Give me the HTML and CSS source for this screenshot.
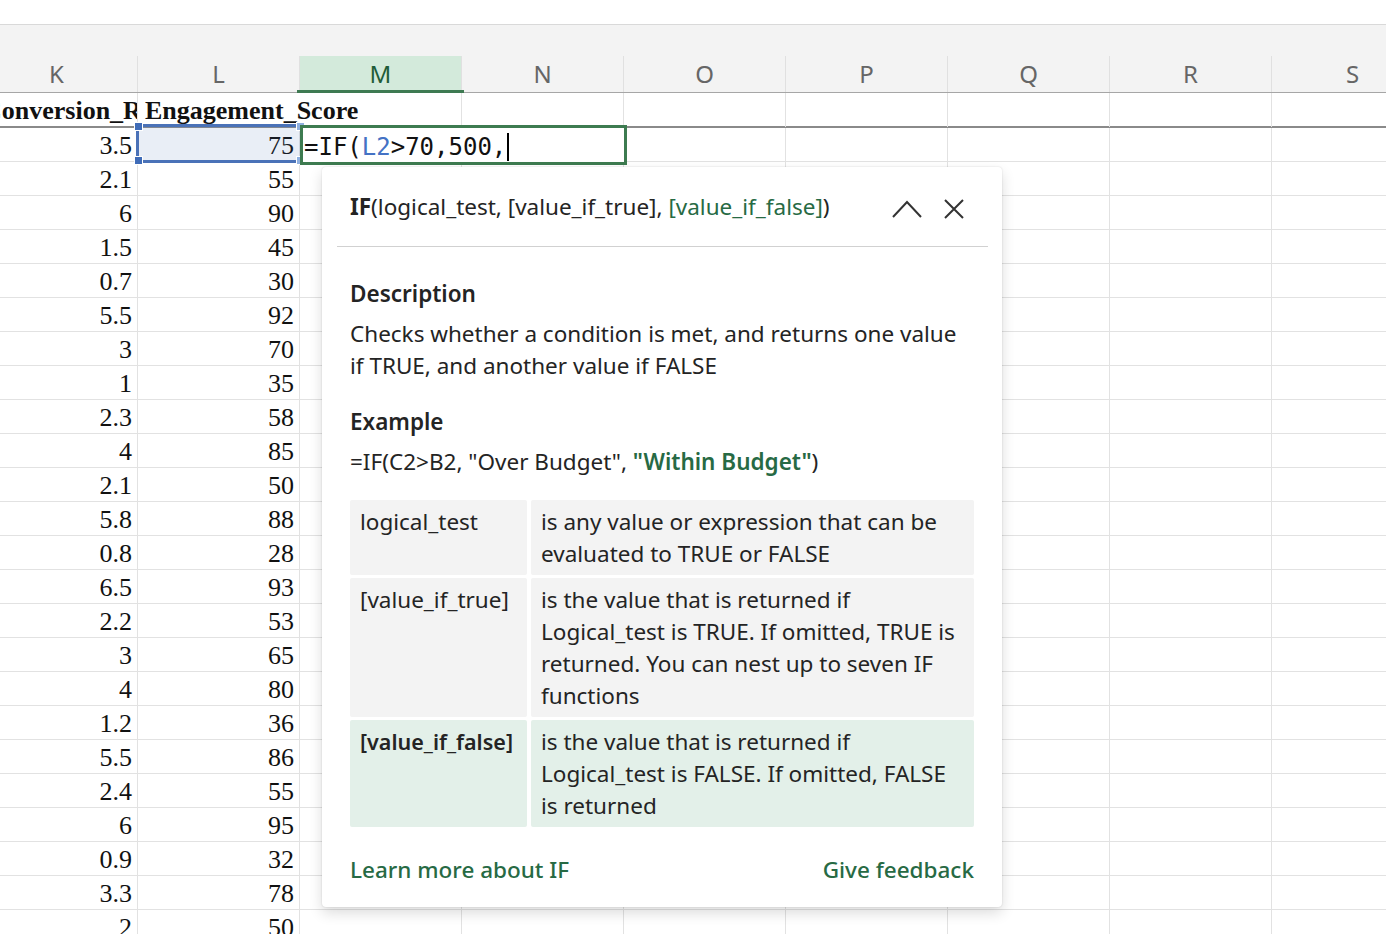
FILE: index.html
```html
<!DOCTYPE html>
<html>
<head>
<meta charset="utf-8">
<link rel="stylesheet" href="styles.css">
</head>
<body>
<div class="app">
  <div class="topbar"></div>
  <div class="sheet">
    <div class="band">
      <div class="row hdr">
        <div class="h">K</div><div class="h">L</div><div class="h on">M</div><div class="h">N</div><div class="h">O</div><div class="h">P</div><div class="h">Q</div><div class="h">R</div><div class="h">S</div>
      </div>
    </div>
    <div class="row r1">
      <div class="c t clip">Conversion_Rate</div><div class="c t over">Engagement_Score</div><div class="c"></div><div class="c"></div><div class="c"></div><div class="c"></div><div class="c"></div><div class="c"></div><div class="c"></div>
    </div>
    <div class="row"><div class="c">3.5</div><div class="c">75</div><div class="c"></div><div class="c"></div><div class="c"></div><div class="c"></div><div class="c"></div><div class="c"></div><div class="c"></div></div>
    <div class="row"><div class="c">2.1</div><div class="c">55</div><div class="c"></div><div class="c"></div><div class="c"></div><div class="c"></div><div class="c"></div><div class="c"></div><div class="c"></div></div>
    <div class="row"><div class="c">6</div><div class="c">90</div><div class="c"></div><div class="c"></div><div class="c"></div><div class="c"></div><div class="c"></div><div class="c"></div><div class="c"></div></div>
    <div class="row"><div class="c">1.5</div><div class="c">45</div><div class="c"></div><div class="c"></div><div class="c"></div><div class="c"></div><div class="c"></div><div class="c"></div><div class="c"></div></div>
    <div class="row"><div class="c">0.7</div><div class="c">30</div><div class="c"></div><div class="c"></div><div class="c"></div><div class="c"></div><div class="c"></div><div class="c"></div><div class="c"></div></div>
    <div class="row"><div class="c">5.5</div><div class="c">92</div><div class="c"></div><div class="c"></div><div class="c"></div><div class="c"></div><div class="c"></div><div class="c"></div><div class="c"></div></div>
    <div class="row"><div class="c">3</div><div class="c">70</div><div class="c"></div><div class="c"></div><div class="c"></div><div class="c"></div><div class="c"></div><div class="c"></div><div class="c"></div></div>
    <div class="row"><div class="c">1</div><div class="c">35</div><div class="c"></div><div class="c"></div><div class="c"></div><div class="c"></div><div class="c"></div><div class="c"></div><div class="c"></div></div>
    <div class="row"><div class="c">2.3</div><div class="c">58</div><div class="c"></div><div class="c"></div><div class="c"></div><div class="c"></div><div class="c"></div><div class="c"></div><div class="c"></div></div>
    <div class="row"><div class="c">4</div><div class="c">85</div><div class="c"></div><div class="c"></div><div class="c"></div><div class="c"></div><div class="c"></div><div class="c"></div><div class="c"></div></div>
    <div class="row"><div class="c">2.1</div><div class="c">50</div><div class="c"></div><div class="c"></div><div class="c"></div><div class="c"></div><div class="c"></div><div class="c"></div><div class="c"></div></div>
    <div class="row"><div class="c">5.8</div><div class="c">88</div><div class="c"></div><div class="c"></div><div class="c"></div><div class="c"></div><div class="c"></div><div class="c"></div><div class="c"></div></div>
    <div class="row"><div class="c">0.8</div><div class="c">28</div><div class="c"></div><div class="c"></div><div class="c"></div><div class="c"></div><div class="c"></div><div class="c"></div><div class="c"></div></div>
    <div class="row"><div class="c">6.5</div><div class="c">93</div><div class="c"></div><div class="c"></div><div class="c"></div><div class="c"></div><div class="c"></div><div class="c"></div><div class="c"></div></div>
    <div class="row"><div class="c">2.2</div><div class="c">53</div><div class="c"></div><div class="c"></div><div class="c"></div><div class="c"></div><div class="c"></div><div class="c"></div><div class="c"></div></div>
    <div class="row"><div class="c">3</div><div class="c">65</div><div class="c"></div><div class="c"></div><div class="c"></div><div class="c"></div><div class="c"></div><div class="c"></div><div class="c"></div></div>
    <div class="row"><div class="c">4</div><div class="c">80</div><div class="c"></div><div class="c"></div><div class="c"></div><div class="c"></div><div class="c"></div><div class="c"></div><div class="c"></div></div>
    <div class="row"><div class="c">1.2</div><div class="c">36</div><div class="c"></div><div class="c"></div><div class="c"></div><div class="c"></div><div class="c"></div><div class="c"></div><div class="c"></div></div>
    <div class="row"><div class="c">5.5</div><div class="c">86</div><div class="c"></div><div class="c"></div><div class="c"></div><div class="c"></div><div class="c"></div><div class="c"></div><div class="c"></div></div>
    <div class="row"><div class="c">2.4</div><div class="c">55</div><div class="c"></div><div class="c"></div><div class="c"></div><div class="c"></div><div class="c"></div><div class="c"></div><div class="c"></div></div>
    <div class="row"><div class="c">6</div><div class="c">95</div><div class="c"></div><div class="c"></div><div class="c"></div><div class="c"></div><div class="c"></div><div class="c"></div><div class="c"></div></div>
    <div class="row"><div class="c">0.9</div><div class="c">32</div><div class="c"></div><div class="c"></div><div class="c"></div><div class="c"></div><div class="c"></div><div class="c"></div><div class="c"></div></div>
    <div class="row"><div class="c">3.3</div><div class="c">78</div><div class="c"></div><div class="c"></div><div class="c"></div><div class="c"></div><div class="c"></div><div class="c"></div><div class="c"></div></div>
    <div class="row"><div class="c">2</div><div class="c">50</div><div class="c"></div><div class="c"></div><div class="c"></div><div class="c"></div><div class="c"></div><div class="c"></div><div class="c"></div></div>
  </div>

  <div class="refbox">
    <span class="hd tl"></span><span class="hd bl"></span><span class="hd tr"></span><span class="hd br"></span>
  </div>
  <div class="edit">=IF(<span class="ref">L2</span>&gt;70,500,<span class="caret"></span></div>

  <div class="popup">
    <div class="pop-head">
      <div class="sig"><b>IF</b>(logical_test, [value_if_true], <span class="cur">[value_if_false]</span>)</div>
      <div class="tools">
        <span class="ib"><svg width="32" height="32" viewBox="0 0 32 32"><path d="M2 26 L16 11 L30 26" fill="none" stroke="#333" stroke-width="2"/></svg></span>
        <span class="ib"><svg width="32" height="32" viewBox="0 0 32 32"><path d="M7 9 L25 27 M25 9 L7 27" fill="none" stroke="#333" stroke-width="2"/></svg></span>
      </div>
    </div>
    <div class="pop-body">
      <div class="sec-h">Description</div>
      <div class="txt">Checks whether a condition is met, and returns one value<br>if TRUE, and another value if FALSE</div>
      <div class="sec-h ex">Example</div>
      <div class="txt">=IF(C2&gt;B2, "Over Budget", <span class="hl">"Within Budget"</span>)</div>
      <div class="args">
        <div class="a">logical_test</div>
        <div class="a">is any value or expression that can be<br>evaluated to TRUE or FALSE</div>
        <div class="a">[value_if_true]</div>
        <div class="a">is the value that is returned if<br>Logical_test is TRUE. If omitted, TRUE is<br>returned. You can nest up to seven IF<br>functions</div>
        <div class="a cur-row name">[value_if_false]</div>
        <div class="a cur-row">is the value that is returned if<br>Logical_test is FALSE. If omitted, FALSE<br>is returned</div>
      </div>
      <div class="links">
        <span class="lnk">Learn more about IF</span>
        <span class="lnk">Give feedback</span>
      </div>
    </div>
  </div>
</div>
</body>
</html>
```

FILE: styles.css
```css
html, body {
  margin: 0;
  padding: 0;
  background: #fff;
  overflow: hidden;
}
.app {
  position: relative;
  width: 1386px;
  height: 934px;
  overflow: hidden;
}
.topbar {
  height: 24px;
  background: #fff;
  border-bottom: 1px solid #d9d9d9;
}
.sheet {
  margin-left: -24px;
  width: 1458px;
}
.band {
  background: #f3f3f3;
  padding-top: 31px;
}
.row {
  display: grid;
  grid-template-columns: repeat(9, 162px);
  height: 34px;
  box-sizing: border-box;
  border-bottom: 1px solid #e2e2e2;
}
.row.hdr {
  height: 37px;
  border-bottom: 1px solid #a6a6a6;
}
.h {
  position: relative;
  display: flex;
  align-items: center;
  justify-content: center;
  font-family: "Noto Sans", sans-serif;
  font-size: 24px;
  color: #666;
  border-right: 1px solid #e0e0e0;
  padding-bottom: 2px;
}
.h.on {
  background: #d3eadb;
  color: #1f5c38;
}
.h.on::after {
  content: "";
  position: absolute;
  left: -3px;
  right: -3px;
  bottom: -1px;
  height: 3px;
  background: #3e7a52;
}
.row.r1 {
  height: 35px;
  border-bottom: 2px solid #8a8a8a;
}
.c {
  font-family: "Liberation Serif", "Times New Roman", serif;
  font-size: 26px;
  line-height: 30px;
  padding: 3px 5px 0 5px;
  text-align: right;
  color: #111;
  border-right: 1px solid #e2e2e2;
  white-space: nowrap;
  overflow: hidden;
}
.c.t {
  font-weight: bold;
  text-align: left;
  line-height: 33px;
  padding: 1px 0 0 7px;
}
.c.over {
  overflow: visible;
  border-right: none;
}
.refbox {
  position: absolute;
  left: 136px;
  top: 124px;
  width: 164px;
  height: 39px;
  box-sizing: border-box;
  border: 3px solid #4a72b8;
  border-right: none;
  background: rgba(74, 114, 184, 0.12);
}
.hd {
  position: absolute;
  width: 7px;
  height: 7px;
  background: #3f6cb8;
  border: 1px solid #fff;
}
.hd.tl { left: -5px; top: -5px; }
.hd.bl { left: -5px; bottom: -5px; }
.hd.tr { right: -5px; top: -5px; background: #8fb0e0; }
.hd.br { right: -5px; bottom: -5px; background: #8fb0e0; }
.edit {
  position: absolute;
  left: 300px;
  top: 125px;
  width: 327px;
  height: 40px;
  box-sizing: border-box;
  border: 3px solid #3d7b50;
  background: #fff;
  font-family: "DejaVu Sans Mono", monospace;
  font-size: 24px;
  line-height: 34px;
  padding: 3px 0 0 1px;
  color: #111;
  white-space: nowrap;
  display: flex;
  align-items: center;
}
.ref { color: #4472c4; }
.caret {
  display: inline-block;
  width: 1.5px;
  height: 28px;
  background: #000;
  margin-left: 1px;
}
.popup {
  position: absolute;
  left: 322px;
  top: 167px;
  width: 680px;
  height: 740px;
  box-sizing: border-box;
  background: #fff;
  border-radius: 4px;
  box-shadow: 0 0 2px rgba(0,0,0,0.14), 0 6px 14px rgba(0,0,0,0.14);
  font-family: "Noto Sans", sans-serif;
  color: #242424;
}
.pop-head {
  margin: 0 14px 0 15px;
  padding: 0 18px 0 13px;
  height: 80px;
  box-sizing: border-box;
  border-bottom: 1px solid #d1d1d1;
  display: flex;
  align-items: center;
  justify-content: space-between;
}
.sig {
  font-size: 22.5px;
  color: #242424;
}
.sig b { font-weight: 700; }
.cur { color: #276a44; }
.tools {
  display: flex;
  gap: 15px;
}
.ib {
  display: flex;
  width: 32px;
  height: 32px;
}
.pop-body {
  padding: 31px 28px 0 28px;
}
.sec-h {
  font-size: 22.5px;
  font-weight: 600;
  line-height: 32px;
  margin-bottom: 8px;
}
.sec-h.ex { margin-top: 24px; }
.txt {
  font-size: 22.5px;
  line-height: 32px;
}
.hl { color: #276a44; font-weight: 600; }
.args {
  margin-top: 22px;
  display: grid;
  grid-template-columns: 177px 1fr;
  gap: 3px 4px;
}
.a {
  background: #f3f3f3;
  font-size: 22.5px;
  line-height: 32px;
  padding: 6px 8px 5px 10px;
  border-radius: 2px;
  white-space: nowrap;
  overflow: hidden;
}
.a.cur-row { background: #e3f0e9; }
.a.name { font-weight: 600; font-size: 21.5px; }
.links {
  margin-top: 27px;
  display: flex;
  justify-content: space-between;
  font-size: 22.5px;
  line-height: 32px;
}
.lnk { color: #276a44; font-weight: 500; }
```
